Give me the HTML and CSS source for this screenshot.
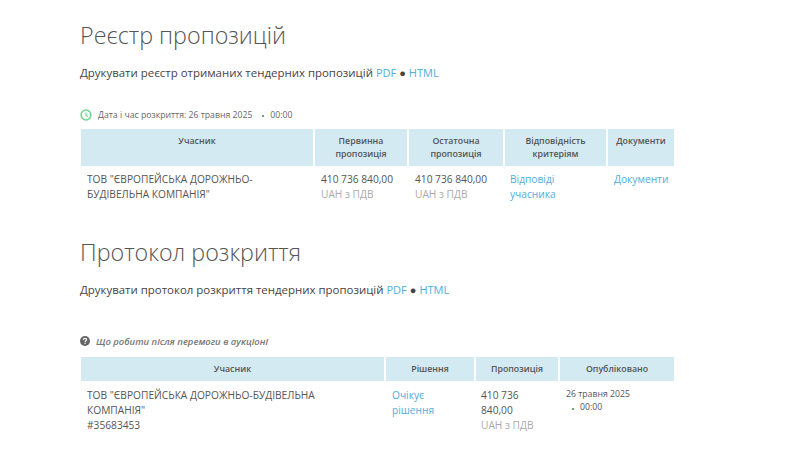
FILE: index.html
```html
<!DOCTYPE html>
<html lang="uk">
<head>
<meta charset="utf-8">
<title>Реєстр пропозицій</title>
<link rel="stylesheet" href="styles.css">
</head>
<body>
<main class="page">
  <section class="block block-first">
    <h1 class="title">Реєстр пропозицій</h1>
    <p class="print">Друкувати реєстр отриманих тендерних пропозицій <a href="#">PDF</a> <span class="dot">●</span> <a href="#">HTML</a></p>
    <p class="meta">
      <svg class="clock" viewBox="0 0 12 12" width="12" height="12" aria-hidden="true"><circle cx="6" cy="6" r="4.9" fill="none" stroke="#6fd58f" stroke-width="1.5"/><path d="M6 3.2V6.3L8 7.4" fill="none" stroke="#6fd58f" stroke-width="1.1"/></svg>
      <span>Дата і час розкриття: 26 травня 2025</span><span class="sep"></span><span>00:00</span>
    </p>
    <table class="grid grid-a">
      <colgroup><col class="a1"><col class="a2"><col class="a3"><col class="a4"><col class="a5"></colgroup>
      <thead><tr><th>Учасник</th><th>Первинна пропозиція</th><th>Остаточна пропозиція</th><th>Відповідність критеріям</th><th>Документи</th></tr></thead>
      <tbody><tr>
        <td>ТОВ "ЄВРОПЕЙСЬКА ДОРОЖНЬО-БУДІВЕЛЬНА КОМПАНІЯ"</td>
        <td>410 736 840,00<br><span class="muted">UAH з ПДВ</span></td>
        <td>410 736 840,00<br><span class="muted">UAH з ПДВ</span></td>
        <td class="answers"><a href="#">Відповіді учасника</a></td>
        <td><a href="#">Документи</a></td>
      </tr></tbody>
    </table>
  </section>
  <section class="block">
    <h1 class="title">Протокол розкриття</h1>
    <p class="print">Друкувати протокол розкриття тендерних пропозицій <a href="#">PDF</a> <span class="dot">●</span> <a href="#">HTML</a></p>
    <p class="help">
      <svg class="qmark" viewBox="0 0 10 10" width="10" height="10" aria-hidden="true"><circle cx="5" cy="5" r="5" fill="#666"/><path d="M3.4 3.9C3.4 2.9 4.1 2.4 5 2.4S6.6 2.9 6.6 3.7C6.6 4.7 5.1 4.8 5.1 6" fill="none" stroke="#fff" stroke-width="1.1"/><rect x="4.5" y="6.7" width="1.2" height="1.2" fill="#fff"/></svg>
      <em>Що робити після перемоги в аукціоні</em>
    </p>
    <table class="grid grid-b">
      <colgroup><col class="b1"><col class="b2"><col class="b3"><col class="b4"></colgroup>
      <thead><tr><th>Учасник</th><th>Рішення</th><th>Пропозиція</th><th>Опубліковано</th></tr></thead>
      <tbody><tr>
        <td>ТОВ "ЄВРОПЕЙСЬКА ДОРОЖНЬО-БУДІВЕЛЬНА КОМПАНІЯ"<br>#35683453</td>
        <td><a href="#">Очікує рішення</a></td>
        <td class="offer">410 736 840,00<br><span class="muted">UAH з ПДВ</span></td>
        <td class="date">26 травня 2025<br><span class="time"><span class="sep"></span><span>00:00</span></span></td>
      </tr></tbody>
    </table>
  </section>
</main>
</body>
</html>
```
FILE: styles.css
```css
* { box-sizing: border-box; }
html, body { margin: 0; padding: 0; background: #fff; }
body {
  font-family: "Open Sans", "Noto Sans", sans-serif;
  color: #555;
  height: 450px;
  overflow: hidden;
}
a { color: #4eaee0; text-decoration: none; }
.page { width: 594px; margin-left: 80px; }
.block-first { padding-top: 19px; }
.block + .block { margin-top: 28px; }
.title {
  margin: 0;
  font-size: 23.3px;
  line-height: 33px;
  font-weight: 300;
  color: #555;
}
.print {
  margin: 12px 0 0;
  font-size: 11.45px;
  line-height: 18px;
  color: #444;
}
.print a { font-size: 11px; }
.dot { font-size: 11px; color: #444; }
.meta {
  display: flex;
  align-items: center;
  margin: 24px 0 0;
  height: 18px;
  font-size: 8.7px;
  color: #666;
}
.clock { margin-right: 6px; }
.sep {
  display: inline-block;
  width: 2px;
  height: 2px;
  margin: 2px 6px 0 10px;
  background: #6aa86a;
  vertical-align: middle;
}
.time .sep { margin-left: 6px; }
.help {
  display: flex;
  align-items: center;
  margin: 33px 0 0;
  height: 18px;
  font-size: 9.45px;
  color: #777;
}
.qmark { margin-right: 6px; }
.help em { font-weight: 600; font-style: italic; }
.grid {
  width: 593px;
  margin: 5px 0 0 1px;
  border-collapse: collapse;
  table-layout: fixed;
}
.help + .grid { margin-top: 7px; }
.grid th {
  padding: 6px 8px 5px;
  height: 37px;
  background: #d4eaf2;
  border-right: 2px solid #fff;
  font-size: 8.8px;
  line-height: 12.5px;
  font-weight: 600;
  color: #555;
  text-align: center;
  vertical-align: top;
}
.grid th:last-child { border-right: 0; }
.grid td {
  padding: 6px 6px 6px 7px;
  font-size: 10.2px;
  line-height: 15px;
  vertical-align: top;
  color: #555;
}
.grid td:first-child { padding-left: 6px; }
.grid td.answers { padding-left: 6px; }
.grid-b th { height: 24px; padding-top: 6px; }
.grid-b td { padding-top: 7px; padding-right: 10px; }
.grid td.offer { padding-left: 6px; }
.muted { color: #aaa; }
.a1 { width: 233px; }
.a2 { width: 94px; }
.a3 { width: 96px; }
.a4 { width: 103px; }
.a5 { width: 67px; }
.b1 { width: 304px; }
.b2 { width: 90px; }
.b3 { width: 84px; }
.b4 { width: 115px; }
.grid td.date { font-size: 8.7px; line-height: 13px; padding-right: 6px; }
.time { display: inline-block; }
```
